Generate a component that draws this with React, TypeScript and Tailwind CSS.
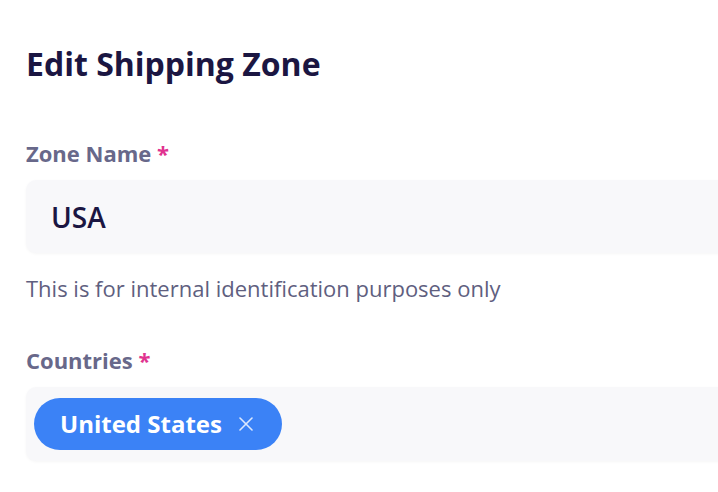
export default function App() {
  return (
    <div className="min-h-screen bg-white pl-[26px] pt-[42px] font-['Open_Sans',sans-serif]">
      <h1 className="text-[32px] leading-[44px] font-bold text-[#1b1642]">
        Edit Shipping Zone
      </h1>

      <div className="mt-[52px]">
        <label className="block text-[22px] leading-[30px] font-bold text-[#68688a]">
          Zone Name <span className="text-[#e0338f]">*</span>
        </label>
        <div className="mt-[12px] flex h-[73px] w-[720px] items-center rounded-[10px] bg-[#f8f8fa] pl-[25px] shadow-[0_1px_3px_rgba(0,0,0,0.04)]">
          <span className="text-[28px] font-semibold text-[#1b1642]">USA</span>
        </div>
        <p className="mt-[20px] text-[22px] leading-[30px] text-[#5f5f7f]">
          This is for internal identification purposes only
        </p>
      </div>

      <div className="mt-[42px]">
        <label className="block text-[22px] leading-[30px] font-bold text-[#68688a]">
          Countries <span className="text-[#e0338f]">*</span>
        </label>
        <div className="mt-[12px] flex h-[74px] w-[720px] items-center rounded-[10px] bg-[#f8f8fa] pl-[8px] shadow-[0_1px_3px_rgba(0,0,0,0.04)]">
          <span className="flex h-[52px] items-center gap-[17px] rounded-full bg-[#3b82f6] pl-[26px] pr-[29px]">
            <span className="text-[24px] leading-[30px] font-bold text-white">United States</span>
            <svg width="14" height="14" viewBox="0 0 14 14" fill="none" stroke="#dce8fd" strokeWidth="1.6" strokeLinecap="round">
              <line x1="1" y1="1" x2="13" y2="13" />
              <line x1="13" y1="1" x2="1" y2="13" />
            </svg>
          </span>
        </div>
      </div>
    </div>
  );
}
